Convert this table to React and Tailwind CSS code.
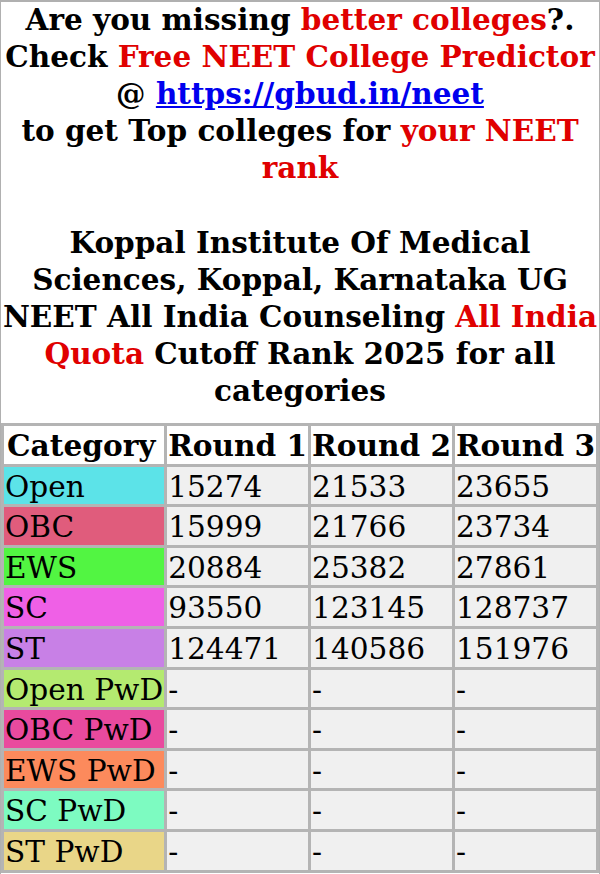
import React from 'react';

const rows = [
    { name: 'Open', color: 'bg-[#5ce3e8]', r: ['15274', '21533', '23655'] },
    { name: 'OBC', color: 'bg-[#e05c7c]', r: ['15999', '21766', '23734'] },
    { name: 'EWS', color: 'bg-[#52f542]', r: ['20884', '25382', '27861'] },
    { name: 'SC', color: 'bg-[#ef60e6]', r: ['93550', '123145', '128737'] },
    { name: 'ST', color: 'bg-[#c880e6]', r: ['124471', '140586', '151976'] },
    { name: 'Open PwD', color: 'bg-[#b4ea70]', r: ['-', '-', '-'] },
    { name: 'OBC PwD', color: 'bg-[#e94a9e]', r: ['-', '-', '-'] },
    { name: 'EWS PwD', color: 'bg-[#fc8a5c]', r: ['-', '-', '-'] },
    { name: 'SC PwD', color: 'bg-[#7dfbc1]', r: ['-', '-', '-'] },
    { name: 'ST PwD', color: 'bg-[#e9d688]', r: ['-', '-', '-'] },
];

const red = 'text-[#e00000]';

export default function App() {
    return (
        <div className="min-h-[874px] border-x border-t-2 border-[#b0b0b0] bg-white font-['DejaVu_Serif',serif] text-black">
            <div className="-mt-[1px] whitespace-nowrap text-center font-bold text-[29.5px] leading-[37.1px]">
                Are you missing <span className={red}>better colleges</span>?.<br />
                Check <span className={red}>Free NEET College Predictor</span><br />
                @ <a href="#" className="text-[#0000ee] underline">https://gbud.in/neet</a><br />
                to get Top colleges for <span className={red}>your NEET</span><br />
                <span className={red}>rank</span>
                <br /><br />
                Koppal Institute Of Medical<br />
                Sciences, Koppal, Karnataka UG<br />
                NEET All India Counseling <span className={red}>All India</span><br />
                <span className={red}>Quota</span> Cutoff Rank 2025 for all<br />
                categories
            </div>
            {/* cutoff table */}
            <table className="mt-[14px] w-full border-separate border-spacing-[3px] bg-[#b4b4b4] text-[29.6px] leading-[33.6px]">
                <thead>
                    <tr className="bg-white font-bold">
                        <th className="px-[3px] pt-[3px] pb-[1px] text-left">Category</th>
                        <th className="px-[1px] pt-[3px] pb-[1px] text-left">Round 1</th>
                        <th className="px-[1px] pt-[3px] pb-[1px] text-left">Round 2</th>
                        <th className="px-[1px] pt-[3px] pb-[1px] text-left">Round 3</th>
                    </tr>
                </thead>
                <tbody>
                    {rows.map((row) => (
                        <tr key={row.name}>
                            <td className={`${row.color} px-[1px] pt-[4px] pb-0`}>{row.name}</td>
                            {row.r.map((v, i) => (
                                <td key={i} className="bg-[#f0f0f0] px-[1px] pt-[4px] pb-0">{v}</td>
                            ))}
                        </tr>
                    ))}
                </tbody>
            </table>
        </div>
    );
}
